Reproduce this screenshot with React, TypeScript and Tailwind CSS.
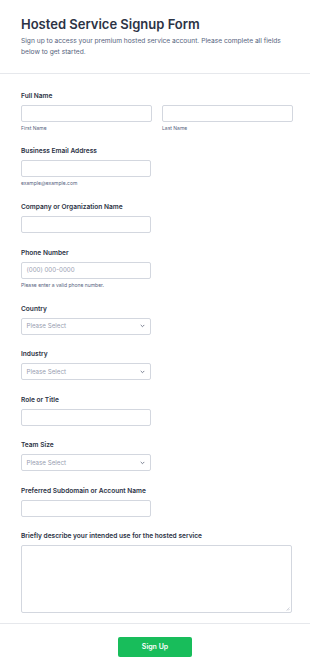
import type { FC } from "react";

const fieldBox = "h-[17px] w-[130px] rounded-[2px] border border-[#d3d7df] bg-white";

const Label: FC<{ text: string }> = ({ text }) => (
  <div className="h-[10px] mb-[4px] text-[6.6px] leading-[10px] font-semibold text-[#2c3345]">{text}</div>
);

const Sub: FC<{ text: string }> = ({ text }) => (
  <div className="mt-[3px] h-[7px] text-[5px] leading-[7px] text-[#57647e]">{text}</div>
);

const TextField: FC<{ label: string; placeholder?: string; sub?: string }> = ({ label, placeholder, sub }) => (
  <div className={sub ? "mb-[15px]" : "mb-[14.5px]"}>
    <Label text={label} />
    <div className={`${fieldBox} flex items-center px-[4.5px] text-[6.2px] text-[#979db0]`}>{placeholder}</div>
    {sub && <Sub text={sub} />}
  </div>
);

const SelectField: FC<{ label: string }> = ({ label }) => (
  <div className="mb-[14.5px]">
    <Label text={label} />
    <div className={`${fieldBox} flex items-center justify-between pl-[4.5px] pr-[5px] text-[6.2px] text-[#979db0]`}>
      <span>Please Select</span>
      <svg width="5" height="4" viewBox="0 0 5 4" fill="none">
        <path d="M1 1.2l1.5 1.5 1.5-1.5" stroke="#6b7386" strokeWidth="0.9" strokeLinecap="round" strokeLinejoin="round" />
      </svg>
    </div>
  </div>
);

export default function App() {
  return (
    <div className="w-[310px] min-h-[672px] bg-white font-['Inter',sans-serif]">
      <div className="px-[21px] pt-[16px] pb-[15.5px] border-b border-[#e6e8ec]">
        <h1 className="text-[13px] leading-[17px] font-semibold text-[#2c3345]">Hosted Service Signup Form</h1>
        <p className="mt-[2.5px] text-[6.65px] leading-[11px] text-[#57647e]">
          Sign up to access your premium hosted service account. Please complete all fields below to get started.
        </p>
      </div>

      <div className="pl-[21px] pr-[18px] pt-[17px]">
        <div className="mb-[14px]">
          <Label text="Full Name" />
          <div className="flex gap-[10px]">
            <div>
              <div className={`${fieldBox} w-[131px]`} />
              <Sub text="First Name" />
            </div>
            <div>
              <div className={`${fieldBox} w-[131px]`} />
              <Sub text="Last Name" />
            </div>
          </div>
        </div>

        <TextField label="Business Email Address" sub="example@example.com" />
        <TextField label="Company or Organization Name" />
        <TextField label="Phone Number" placeholder="(000) 000-0000" sub="Please enter a valid phone number." />

        <SelectField label="Country" />
        <SelectField label="Industry" />
        <TextField label="Role or Title" />
        <SelectField label="Team Size" />
        <TextField label="Preferred Subdomain or Account Name" />

        <div>
          <Label text="Briefly describe your intended use for the hosted service" />
          <div className="relative h-[68px] w-[271px] rounded-[2px] border border-[#d3d7df] bg-white">
            <svg width="4" height="4" viewBox="0 0 4 4" className="absolute bottom-[1px] right-[1px]">
              <path d="M3.5 0.5L0.5 3.5M3.5 2L2 3.5" stroke="#b5bac6" strokeWidth="0.6" />
            </svg>
          </div>
        </div>
      </div>

      <div className="mt-[10px] border-t border-[#e6e8ec] pt-[13px] flex justify-center">
        <button className="h-[20px] w-[74px] rounded-[2px] bg-[#18bd5b] text-[7px] font-semibold text-white">
          Sign Up
        </button>
      </div>
    </div>
  );
}
